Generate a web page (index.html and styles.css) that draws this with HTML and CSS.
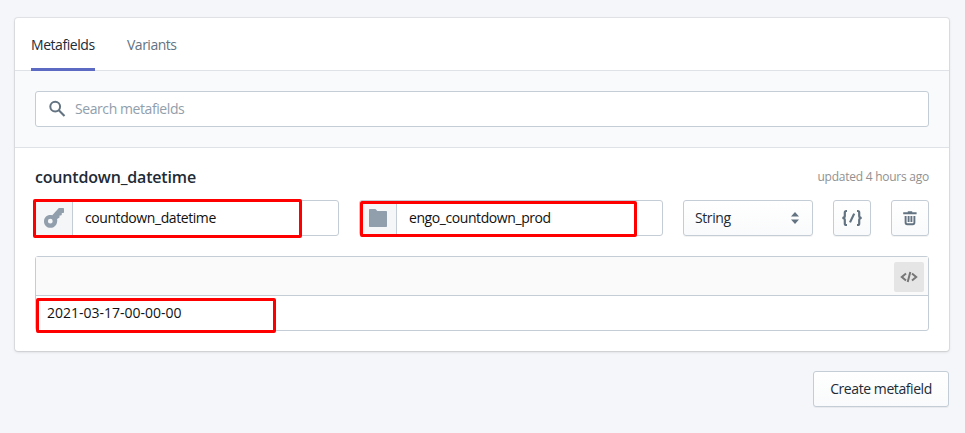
FILE: index.html
```
<!DOCTYPE html>
<html lang="en">
<head>
<meta charset="utf-8">
<title>Metafields</title>
<link rel="stylesheet" href="styles.css">
</head>
<body>
<main class="page">
  <section class="card">
    <nav class="tabs">
      <a class="tab active">Metafields</a>
      <a class="tab variants">Variants</a>
    </nav>
    <div class="filter">
      <div class="search">
        <svg width="20" height="20" viewBox="0 0 20 20"><circle cx="7.2" cy="7.6" r="4.9" fill="none" stroke="#637381" stroke-width="2"/><path d="M10.8 11.2L16.5 16.9" stroke="#637381" stroke-width="2.1"/></svg>
        <span class="placeholder">Search metafields</span>
      </div>
    </div>
    <div class="metafield">
      <header class="heading">
        <h2>countdown_datetime</h2>
        <span class="updated">updated 4 hours ago</span>
      </header>
      <div class="controls">
        <div class="field key-field">
          <span class="prefix"><svg width="22" height="22" viewBox="0 0 22 22"><path fill="#919eab" fill-rule="evenodd" d="M15.8 1H20c.7 0 1 .4 1 1v3.3c0 .5-.3.8-.8.8h-1.4v1.5c0 .5-.3.8-.8.8h-1.5v1.5c0 .4-.1.6-.4.8l-2 1.2c.9 4.7-2.2 8.9-6.6 8.9-3.8 0-6.5-2.8-6.5-6.4 0-4.3 3.8-7.3 8.3-6.1zM7.3 11.8a2.4 2.4 0 1 0 0 4.8 2.4 2.4 0 0 0 0-4.8z"/></svg></span>
          <span class="value key-value">countdown_datetime</span>
          <i class="mark mark-key"></i>
        </div>
        <div class="field folder-field">
          <span class="prefix"><svg width="18" height="18" viewBox="0 0 18 18"><path fill="#919eab" d="M1 0h5.2c.4 0 .6.2.8.5L8.3 2H17c.6 0 1 .4 1 1v14c0 .6-.4 1-1 1H1c-.6 0-1-.4-1-1V1c0-.6.4-1 1-1z"/></svg></span>
          <span class="value folder-value">engo_countdown_prod</span>
          <i class="mark mark-folder"></i>
        </div>
        <div class="select"><span class="select-label">String</span><svg width="8" height="12" viewBox="0 0 8 12"><path fill="#637381" d="M0 4.5L4 0l4 4.5zM0 7.5h8L4 12z"/></svg></div>
        <button class="icon-button" aria-label="Liquid code"><svg width="22" height="18" viewBox="0 0 22 18" fill="none" stroke="#637381" stroke-width="2.2"><path d="M6 2H5.2Q3.8 2 3.8 3.6V7Q3.8 8.8 1.4 9Q3.8 9.2 3.8 11V14.4Q3.8 16 5.2 16H6M16 2H16.8Q18.2 2 18.2 3.6V7Q18.2 8.8 20.6 9Q18.2 9.2 18.2 11V14.4Q18.2 16 16.8 16H16M13.2 4.6L9 13.4"/></svg></button>
        <button class="icon-button" aria-label="Delete"><svg width="16" height="16" viewBox="0 0 16 16" fill="none" stroke="#637381" stroke-width="1.9"><path d="M1.2 3.2H14.6M5.8 2.1H10.2M3.6 6V12.6Q3.6 14.3 5.2 14.3H10.8Q12.4 14.3 12.4 12.6V6M6.6 6V12M9.4 6V12"/></svg></button>
      </div>
      <div class="editor">
        <div class="toolbar"><span class="code-button"><svg width="18" height="12" viewBox="0 0 18 12" fill="none" stroke="#777" stroke-width="2"><path d="M6 2.5L1.8 6L6 9.5M12 2.5L16.2 6L12 9.5M10.3 .9L7.7 11.1"/></svg></span></div>
        <div class="content"><span class="date">2021-03-17-00-00-00</span></div>
        <i class="mark mark-content"></i>
      </div>
    </div>
  </section>
  <div class="actions"><button class="create"><span>Create metafield</span></button></div>
</main>
</body>
</html>
```
FILE: styles.css
```
* { box-sizing: border-box; }
body {
  margin: 0;
  height: 433px;
  overflow: hidden;
  background: #f4f6f9;
  color: #212b36;
  font: 14px/20px "Open Sans", "Noto Sans", sans-serif;
}
.page { padding: 18px 16px 0 15px; }
.card {
  height: 333px;
  background: #fff;
  border-radius: 3px;
  box-shadow: 0 0 0 1px rgba(63,63,68,.09), 0 1px 3px rgba(63,63,68,.18);
}
.tabs {
  display: flex;
  gap: 32px;
  height: 53px;
  padding: 0 16px;
  border-bottom: 1px solid #dfe3e8;
}
.tab {
  width: 64px;
  height: 53px;
  padding-top: 17px;
  color: #637381;
  letter-spacing: -.44px;
  white-space: nowrap;
}
.tab.active { color: #212b36; border-bottom: 3px solid #5c6ac4; }
.tab.variants { letter-spacing: -.5px; }
.filter {
  height: 77px;
  padding: 20px;
  background: #f9fafb;
  border-bottom: 1px solid #dfe3e8;
}
.search {
  display: flex;
  align-items: center;
  gap: 8px;
  height: 36px;
  padding-left: 12px;
  background: #fff;
  border: 1px solid #c4cdd5;
  border-radius: 3px;
}
.search svg { margin-right: -1px; }
.placeholder { color: #919eab; letter-spacing: -.42px; }
.metafield { padding: 19px 20px 20px; }
.heading {
  display: flex;
  justify-content: space-between;
  align-items: center;
  height: 20px;
}
h2 { margin: 0; font-size: 16px; line-height: 20px; font-weight: 600; letter-spacing: -.18px; }
.updated { font-size: 12px; color: #919191; letter-spacing: -.25px; }
.controls { display: flex; gap: 20px; margin-top: 13px; }
.field {
  position: relative;
  display: flex;
  flex: 1;
  height: 36px;
  border: 1px solid #c4cdd5;
  border-radius: 3px;
  color: #111;
}
.prefix {
  display: grid;
  place-items: center;
  width: 37px;
  background: #f4f6f8;
  border-right: 1px solid #c4cdd5;
}
.value { padding: 7px 0 0 12px; letter-spacing: -.42px; }
.select {
  display: flex;
  justify-content: space-between;
  align-items: center;
  width: 130px;
  height: 36px;
  padding: 0 13px 0 11px;
}
.select, .icon-button, .create {
  border: 1px solid #c4cdd5;
  border-radius: 3px;
  background: linear-gradient(#fff, #f9fafb);
  box-shadow: 0 1px 0 rgba(22,29,37,.05);
}
.select-label { letter-spacing: -.4px; }
.icon-button { display: grid; place-items: center; width: 38px; height: 36px; padding: 0; }
.editor {
  position: relative;
  height: 75px;
  margin-top: 20px;
  border: 1px solid #c4cdd5;
  border-radius: 3px;
}
.toolbar {
  display: flex;
  justify-content: flex-end;
  height: 39px;
  padding: 5px 4px;
  background: #fafafa;
  border-bottom: 1px solid #c4cdd5;
}
.code-button { display: grid; place-items: center; width: 30px; height: 30px; background: #e5e5e5; border-radius: 2px; }
.content { padding: 7px 12px 0 11px; color: #111; }
.mark { position: absolute; border: 3px solid #fe0000; border-radius: 2px; }
.mark-key { left: -3px; top: -2px; width: 269px; height: 39px; }
.mark-folder { left: 0; top: 0; width: 277px; height: 36px; }
.mark-content { left: 0; top: 41px; width: 240px; height: 35px; }
.actions { display: flex; justify-content: flex-end; padding-top: 20px; }
.create { width: 136px; height: 36px; padding: 0; font: inherit; color: #212b36; letter-spacing: -.42px; white-space: nowrap; }
```
